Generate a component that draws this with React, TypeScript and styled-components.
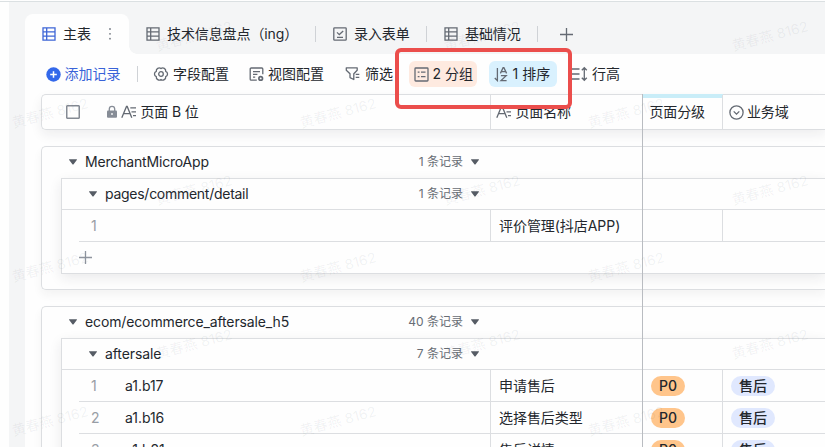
import React from "react";
import styled, { createGlobalStyle } from "styled-components";

const Global = createGlobalStyle`
  * { box-sizing: border-box; }
  body {
    margin: 0;
    background: #fefefe;
    color: #23272d;
    font: 14px/20px Inter, "Noto Sans CJK SC", sans-serif;
    white-space: nowrap;
  }
`;

const Page = styled.div`
  position: relative;
  width: 825px;
  height: 447px;
  overflow: hidden;
  padding-top: 1px;
  background: #fefefe;
`;

const Workspace = styled.div`
  margin-left: 9px;
  padding-left: 16px;
  height: 446px;
  background: #f4f5f6;
`;

const TopRule = styled.div`
  height: 1px;
  margin: 0 0 0 -25px;
  background: #dbe0e2;
`;

const TabBar = styled.div`
  display: flex;
  align-items: stretch;
  height: 52px;
  padding-top: 12px;
`;

const Tab = styled.div<{ $w: number; $active?: boolean }>`
  position: relative;
  display: flex;
  align-items: center;
  gap: 7px;
  width: ${(p) => p.$w}px;
  padding-left: 17px;
  border-radius: 8px 8px 0 0;
  letter-spacing: -0.1px;
  background: ${(p) => (p.$active ? "#fefefe" : "transparent")};
  ${(p) =>
    p.$active &&
    `&::after {
      content: "";
      position: absolute;
      left: 100%;
      bottom: 0;
      width: 8px;
      height: 8px;
      background: radial-gradient(circle at 100% 0, transparent 7.5px, #fefefe 8px);
    }`}
`;

const Rule = styled.i<{ $mr?: number }>`
  flex: none;
  align-self: center;
  width: 1px;
  height: 16px;
  margin-right: ${(p) => p.$mr ?? 0}px;
  background: #cfd2d6;
`;

const Panel = styled.div`
  height: 393px;
  background: #fefefe;
`;

const Toolbar = styled.div`
  display: flex;
  align-items: center;
  height: 40px;
  padding-left: 20.5px;
`;

const Tool = styled.div<{ $w: number; $primary?: boolean }>`
  display: flex;
  align-items: center;
  gap: 4px;
  flex: none;
  width: ${(p) => p.$w}px;
  color: ${(p) => (p.$primary ? "#3963d8" : "inherit")};
`;

const Chip = styled.div<{ $bg: string; $mr: number }>`
  display: flex;
  align-items: center;
  gap: 4px;
  flex: none;
  width: 68px;
  height: 26px;
  margin-right: ${(p) => p.$mr}px;
  padding-left: 4.5px;
  border-radius: 6px;
  background: ${(p) => p.$bg};
`;

const Grid = styled.div`
  margin-left: 16px;
`;

const HeaderRow = styled.div`
  display: flex;
  height: 36px;
  border: 1px solid #dcdee1;
  border-right: 0;
  border-radius: 5px 0 0 5px;
  box-shadow: 0 5px 12px rgba(31, 35, 41, 0.07);
`;

const HeadCell = styled.div<{ $w?: number; $pad: number; $accent?: boolean }>`
  display: flex;
  align-items: center;
  gap: 3.5px;
  flex: ${(p) => (p.$w ? `0 0 ${p.$w}px` : "1")};
  padding-left: ${(p) => p.$pad}px;
  border-right: ${(p) => (p.$w ? "1px solid #dcdee1" : "0")};
  letter-spacing: -0.15px;
  box-shadow: ${(p) => (p.$accent ? "inset 0 3px #c9edf8, 0 -1px #c9edf8" : "none")};
`;

const Checkbox = styled.span`
  width: 14px;
  height: 14px;
  margin-right: 22px;
  border: 1.5px solid #858b94;
  border-radius: 1px;
  box-shadow: inset 0 0 0 0.5px #858b94;
`;

const GroupCard = styled.section`
  height: 144px;
  margin-top: 16px;
  border: 1px solid #dcdee1;
  border-right: 0;
  border-radius: 5px 0 0 5px;
  box-shadow: 0 5px 10px rgba(31, 35, 41, 0.05);
  & + & { height: 180px; }
`;

const SubGroup = styled.div`
  margin-left: 19px;
  border: 1px solid #dcdee1;
  border-right: 0;
  box-shadow: 0 4px 12px rgba(31, 35, 41, 0.09);
`;

const GroupHead = styled.div<{ $h: number }>`
  display: flex;
  align-items: center;
  height: ${(p) => p.$h}px;
  padding-left: 27px;
  gap: 8px;
`;

const TabName = styled.span`
  width: 38px;
`;

const GroupName = styled.span<{ $w: number; $tight: number }>`
  width: ${(p) => p.$w}px;
  letter-spacing: ${(p) => -p.$tight}px;
`;

const Count = styled.span`
  display: flex;
  justify-content: flex-end;
  width: 77px;
  font-size: 12px;
  color: #686d75;
`;

const Row = styled.div`
  display: flex;
  height: 32px;
  margin-left: 17px;
  border-bottom: 1px solid #dcdee1;
`;

const Rows = styled.div`
  border-top: 1px solid #dcdee1;
`;

const Cell = styled.div<{ $w?: number; $pad?: number; $line?: boolean }>`
  display: flex;
  align-items: center;
  flex: ${(p) => (p.$w ? `0 0 ${p.$w}px` : "1")};
  padding-left: ${(p) => p.$pad ?? 8}px;
  letter-spacing: -0.05px;
  border-right: ${(p) => (p.$line ? "1px solid #dcdee1" : "0")};
`;

const Index = styled.span`
  width: 34px;
  padding-top: 1px;
  color: #989da5;
`;

const Tag = styled.span<{ $bg: string }>`
  height: 20px;
  padding: 0 8px;
  border-radius: 10px;
  background: ${(p) => p.$bg};
  font-weight: 500;
  line-height: 20px;
`;

const AddRow = styled.div`
  display: flex;
  align-items: center;
  height: 31px;
  padding-left: 17px;
`;

const FreezeLine = styled.div`
  position: absolute;
  left: 642px;
  top: 94px;
  bottom: 0;
  width: 1px;
  background: #b9bcc1;
`;

const Highlight = styled.div`
  position: absolute;
  left: 395px;
  top: 48px;
  width: 177px;
  height: 61px;
  border: 4px solid #eb4e4c;
  border-radius: 6px;
`;

const Mark = styled.span<{ $x: number; $y: number }>`
  position: absolute;
  left: ${(p) => p.$x}px;
  top: ${(p) => p.$y}px;
  transform: translate(-50%, -50%) rotate(-15deg);
  color: rgba(70, 80, 95, 0.075);
  font-size: 14px;
  letter-spacing: 0.1px;
  pointer-events: none;
`;

const Svg = styled.svg<{ $color?: string }>`
  flex: none;
  display: block;
  fill: none;
  stroke: ${(p) => p.$color ?? "#646a73"};
  stroke-width: 1.3;
`;

const Solid = styled.svg<{ $color: string }>`
  flex: none;
  display: block;
  fill: ${(p) => p.$color};
`;

const TableIcon = ({ color }: { color?: string }) => (
  <Svg width="14" height="14" viewBox="0 0 14 14" $color={color}>
    <path d="M1 .8h12v12.4H1zM4.7 .8v12.4M1 4.9h12M1 9.1h12" />
  </Svg>
);
const FormIcon = () => (
  <Svg width="14" height="14" viewBox="0 0 14 14">
    <rect x=".8" y=".8" width="12.4" height="12.4" rx=".8" />
    <path d="M4 5.4l2.3 2.2 3.9-3.5M4 10.3h6" />
  </Svg>
);
const DotsIcon = () => (
  <Solid width="4" height="14" viewBox="0 0 4 14" $color="#747a83">
    <circle cx="2" cy="2" r=".9" /><circle cx="2" cy="6.8" r=".9" /><circle cx="2" cy="11.7" r=".9" />
  </Solid>
);
const PlusIcon = ({ color }: { color?: string }) => (
  <Svg width="13" height="13" viewBox="0 0 13 13" $color={color}>
    <path d="M6.5 0v13M0 6.5h13" />
  </Svg>
);
const AddIcon = () => (
  <Svg width="15" height="15" viewBox="0 0 15 15" $color="#fff">
    <circle cx="7.5" cy="7.5" r="7.2" fill="#3368ea" stroke="none" />
    <path d="M7.5 4.2v6.6M4.2 7.5h6.6" strokeWidth="1.5" />
  </Svg>
);
const GearIcon = () => (
  <Svg width="16" height="16" viewBox="0 0 16 16">
    <path
      strokeLinejoin="round"
      d="M12.7 10.7A2.9 2.9 0 0 1 8 13.4 2.9 2.9 0 0 1 3.3 10.7 2.9 2.9 0 0 1 3.3 5.3 2.9 2.9 0 0 1 8 2.6 2.9 2.9 0 0 1 12.7 5.3 2.9 2.9 0 0 1 12.7 10.7Z"
    />
    <circle cx="8" cy="8" r="2.3" />
  </Svg>
);
const ViewIcon = () => (
  <Svg width="15" height="15" viewBox="0 0 15 15">
    <path d="M7.8 13.2H2.2a1 1 0 0 1-1-1V2a1 1 0 0 1 1-1h10.6a1 1 0 0 1 1 1v5.2M4 4.6h7M4 7.4h4.4M4 10.2h2.2" />
    <circle cx="11.7" cy="11.4" r="1.8" strokeWidth="1.7" />
  </Svg>
);
const FilterIcon = () => (
  <Svg width="16" height="16" viewBox="0 0 16 16">
    <path strokeLinejoin="round" d="M1.3 1.8h10.9v2.4L8.8 7.8v5.7L5 11.6V7.8L1.3 4.2zM10.7 8.4h3.6M10.7 11.4h3.6" />
  </Svg>
);
const GroupIcon = () => (
  <Svg width="15" height="15" viewBox="0 0 15 15">
    <rect x="1" y="1" width="13" height="13" rx=".8" />
    <path d="M3.7 5.2h1.8M7 5.2h4.5M3.7 9.7h1.8M7 9.7h4.5" />
  </Svg>
);
const SortIcon = () => (
  <Svg width="15" height="15" viewBox="0 0 15 15">
    <path d="M3.4 1v12.6L.8 11M6.4 6.4l2.7-5.7h.8l2.7 5.7M7.4 4.7h4.2M6.9 8.6h5.3l-5.2 5h5.6" />
  </Svg>
);
const HeightIcon = () => (
  <Svg width="16" height="16" viewBox="0 0 16 16">
    <path d="M0 3h7.5M0 8h7.5M0 13h7.5M12.3 1.8v12.4M9.8 4.3l2.5-2.6 2.5 2.6M9.8 11.7l2.5 2.6 2.5-2.6" />
  </Svg>
);
const LockIcon = () => (
  <Svg width="12" height="14" viewBox="0 0 12 14" $color="#868c96">
    <path d="M3.3 6V4a2.7 2.7 0 0 1 5.4 0v2" />
    <rect x="1" y="5.5" width="10" height="7.3" rx="1" fill="#868c96" stroke="none" />
    <path d="M6 8v2" stroke="#fff" />
  </Svg>
);
const TextIcon = () => (
  <Svg width="16" height="14" viewBox="0 0 16 14">
    <path d="M.8 12.8L5.5 1.4h.7l4.6 11.4M2.7 8.7h6.2M9.3 2.9H15M10.5 6.8H15M12 10.7h3" />
  </Svg>
);
const SelectIcon = () => (
  <Svg width="15" height="15" viewBox="0 0 15 15">
    <circle cx="7.5" cy="7.5" r="6.6" />
    <path d="M4.7 6.4l2.8 2.7 2.8-2.7" />
  </Svg>
);
const Caret = () => (
  <Solid width="8" height="6" viewBox="0 0 8 6" $color="#565c65">
    <path d="M.6.3h6.8c.5 0 .7.4.4.8L4.6 5.2c-.3.4-.9.4-1.2 0L.2 1.1C-.1.7.1.3.6.3z" />
  </Solid>
);

type RecordRow = { n: number; id?: string; name: string; level?: string; domain?: string };
type GroupTitleProps = { name: string; count: string; nested?: boolean; tight?: number };

function GroupTitle({ name, count, nested, tight = 0.17 }: GroupTitleProps) {
  return (
    <GroupHead $h={nested ? 30 : 30.5}>
      <Caret />
      <GroupName $w={nested ? 273 : 293} $tight={tight}>{name}</GroupName>
      <Count>{count}</Count>
      <Caret />
    </GroupHead>
  );
}

function DataRow({ row }: { row: RecordRow }) {
  return (
    <Row>
      <Cell $w={412} $pad={12} $line>
        <Index>{row.n}</Index>
        {row.id}
      </Cell>
      <Cell $w={152}>{row.name}</Cell>
      <Cell $w={80} $line>{row.level && <Tag $bg="#ffc58b">{row.level}</Tag>}</Cell>
      <Cell>{row.domain && <Tag $bg="#e0e8fe">{row.domain}</Tag>}</Cell>
    </Row>
  );
}

const NestedSpacer = styled.div`
  height: 0.5px;
`;

const aftersale: RecordRow[] = [
  { n: 1, id: "a1.b17", name: "申请售后", level: "P0", domain: "售后" },
  { n: 2, id: "a1.b16", name: "选择售后类型", level: "P0", domain: "售后" },
  { n: 3, id: "a1.b21", name: "售后详情", level: "P0", domain: "售后" },
];

const marks = [0, 1, 2].flatMap((r) =>
  [0, 1, 2].flatMap((c) => [
    { x: 193.5 + c * 288, y: 36 + r * 154 },
    { x: 49.5 + c * 288, y: 112.5 + r * 154 },
  ])
);

export default function App() {
  return (
    <Page>
      <Global />
      <Workspace>
        <TopRule />
        <TabBar>
          <Tab $w={104} $active>
            <TableIcon color="#3e66d6" />
            <TabName>主表</TabName>
            <DotsIcon />
          </Tab>
          <Tab $w={186}><TableIcon />技术信息盘点（ing）</Tab>
          <Rule />
          <Tab $w={110}><FormIcon />录入表单</Tab>
          <Rule />
          <Tab $w={110}><TableIcon />基础情况</Tab>
          <Rule $mr={5} />
          <Tab $w={50}><PlusIcon /></Tab>
        </TabBar>
        <Panel>
          <Toolbar>
            <Tool $w={91.5} $primary><AddIcon />添加记录</Tool>
            <Rule $mr={15} />
            <Tool $w={96}><GearIcon />字段配置</Tool>
            <Tool $w={96}><ViewIcon />视图配置</Tool>
            <Tool $w={64}><FilterIcon />筛选</Tool>
            <Chip $bg="#feeae0" $mr={12}><GroupIcon />2 分组</Chip>
            <Chip $bg="#d9f1fe" $mr={15}><SortIcon />1 排序</Chip>
            <Tool $w={60}><HeightIcon />行高</Tool>
          </Toolbar>
          <Grid>
            <HeaderRow>
              <HeadCell $w={449} $pad={24}>
                <Checkbox />
                <LockIcon />
                <TextIcon />
                页面 B 位
              </HeadCell>
              <HeadCell $w={152} $pad={5}><TextIcon />页面名称</HeadCell>
              <HeadCell $w={80} $pad={6.5} $accent>页面分级</HeadCell>
              <HeadCell $pad={5.5}><SelectIcon />业务域</HeadCell>
            </HeaderRow>
            <GroupCard>
              <GroupTitle name="MerchantMicroApp" count="1 条记录" />
              <NestedSpacer />
              <SubGroup>
                <GroupTitle name="pages/comment/detail" count="1 条记录" nested tight={0.27} />
                <Rows>
                  <DataRow row={{ n: 1, name: "评价管理(抖店APP)" }} />
                </Rows>
                <AddRow><PlusIcon color="#8f959e" /></AddRow>
              </SubGroup>
            </GroupCard>
            <GroupCard>
              <GroupTitle name="ecom/ecommerce_aftersale_h5" count="40 条记录" tight={0.13} />
              <NestedSpacer />
              <SubGroup>
                <GroupTitle name="aftersale" count="7 条记录" nested tight={0.1} />
                <Rows>{aftersale.map((row) => <DataRow key={row.n} row={row} />)}</Rows>
              </SubGroup>
            </GroupCard>
          </Grid>
        </Panel>
      </Workspace>
      <FreezeLine />
      {marks.map((m) => (
        <Mark key={`${m.x}-${m.y}`} $x={m.x} $y={m.y}>黄春燕 8162</Mark>
      ))}
      <Highlight />
    </Page>
  );
}
